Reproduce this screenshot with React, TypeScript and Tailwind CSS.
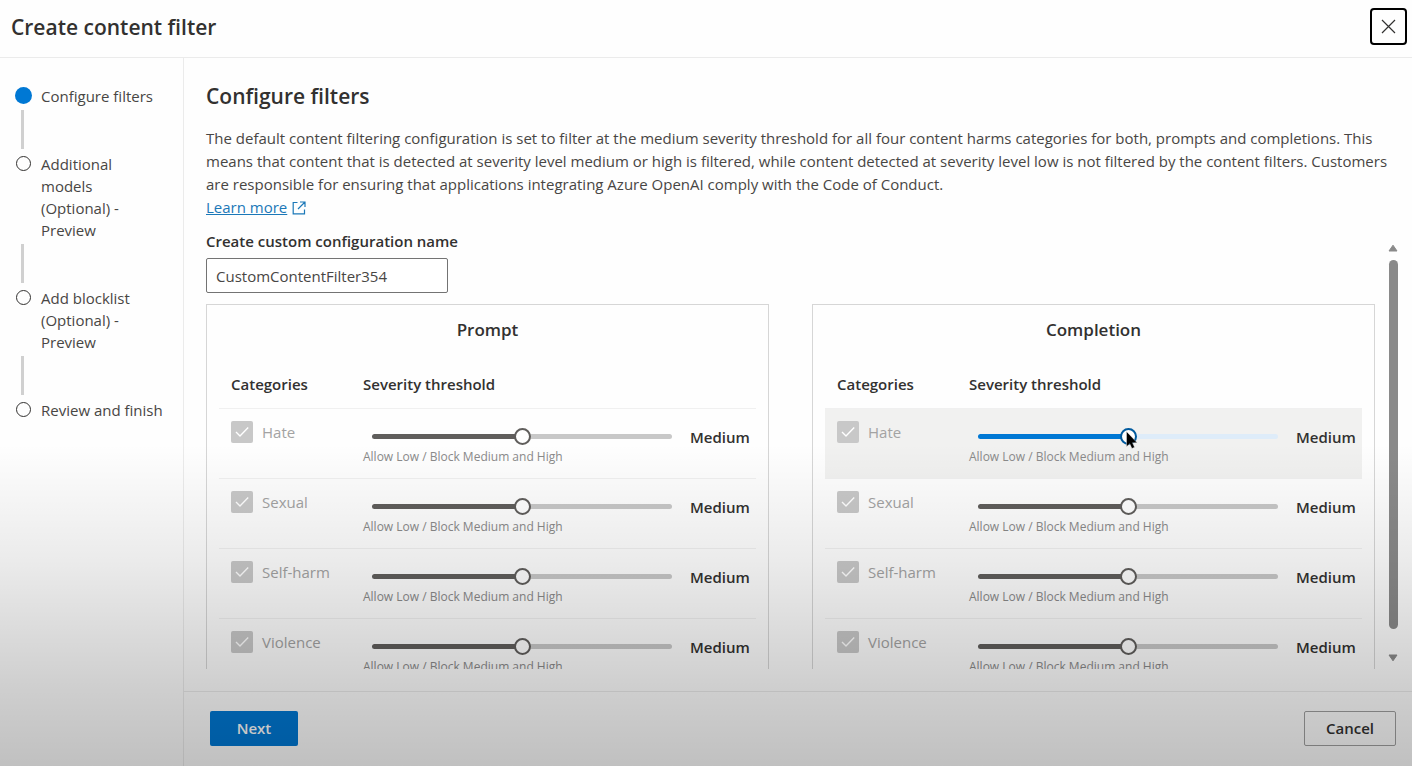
import { useState } from "react";

const steps = [
  { label: "Configure filters", active: true },
  { label: "Additional models (Optional) - Preview", active: false },
  { label: "Add blocklist (Optional) - Preview", active: false },
  { label: "Review and finish", active: false },
];

const categories = ["Hate", "Sexual", "Self-harm", "Violence"];

const levels = [
  { name: "Low", hint: "Block Low, Medium and High" },
  { name: "Medium", hint: "Allow Low / Block Medium and High" },
  { name: "High", hint: "Allow Low and Medium / Block High" },
];

function Steps() {
  return (
    <nav aria-label="Steps" className="w-[184px] shrink-0 border-r border-[#ebebeb] pt-[27px] pr-5 pl-[15px]">
      <ol>
        {steps.map((step, i) => (
          <li key={step.label}>
            <div className="flex gap-[9px]">
              <span className="flex h-5 w-[17px] shrink-0 items-center justify-center">
                {step.active ? (
                  <span className="size-[17px] rounded-full bg-[#0078d4]" />
                ) : (
                  <span className="size-[15px] rounded-full border border-[#323130]" />
                )}
              </span>
              <span className="text-[15px] leading-[22px] text-[#484644]">{step.label}</span>
            </div>
            {i < steps.length - 1 && <div className="mt-[3px] mb-1 ml-[6px] h-[39px] w-[3px] bg-[#d0d0d0]" />}
          </li>
        ))}
      </ol>
    </nav>
  );
}

function Pointer() {
  return (
    <svg className="pointer-events-none absolute top-[3px] left-1/2 -ml-[2px]" width="12" height="18" viewBox="0 0 12 18" aria-hidden="true">
      <path d="M0.500 0.500v15.200l3.300-2.900 2.100 4.700 2.700-1.200-2.100-4.500h4.700z" fill="#000" stroke="#fff" strokeWidth="0.400" />
    </svg>
  );
}

function CategoryRow({ panel, category, hovered }: { panel: string; category: string; hovered: boolean }) {
  const [value, setValue] = useState(1);
  const id = `${panel}-${category}`.toLowerCase();
  return (
    <tr className={`h-[70px] border-t border-[#f0f0f0] align-top ${hovered ? "bg-[#f1f1f0]" : ""}`}>
      <td className="pt-3 pl-3">
        <div className="flex items-center gap-[9px]">
          <span className="relative flex size-[22px]">
            <input
              id={id}
              type="checkbox"
              checked
              disabled
              readOnly
              className="size-[22px] appearance-none rounded-[2px] bg-[#c8c8c8]"
            />
            <svg className="pointer-events-none absolute inset-0" width="22" height="22" viewBox="0 0 22 22" fill="none" aria-hidden="true">
              <path d="M5 11l4 4 8.200-8.500" stroke="#fff" strokeWidth="1.400" />
            </svg>
          </span>
          <label htmlFor={id} className="text-[15px] leading-[22px] text-[#a3a3a3]">
            {category}
          </label>
        </div>
      </td>
      <td className="pt-[19px]">
        <div className="relative mr-[18px] ml-[9px] flex">
          <input
            type="range"
            min={0}
            max={2}
            value={value}
            onChange={(e) => setValue(Number(e.target.value))}
            aria-label={`${panel} ${category} severity threshold`}
            style={{ "--p": `${value * 50}%` } as React.CSSProperties}
            className={`h-[18px] w-full appearance-none bg-transparent [&::-webkit-slider-runnable-track]:h-[5px] [&::-webkit-slider-runnable-track]:rounded-full [&::-webkit-slider-thumb]:-mt-[6px] [&::-webkit-slider-thumb]:size-[17px] [&::-webkit-slider-thumb]:appearance-none [&::-webkit-slider-thumb]:rounded-full [&::-webkit-slider-thumb]:border-2 [&::-webkit-slider-thumb]:bg-white ${
              hovered
                ? "[&::-webkit-slider-runnable-track]:bg-[linear-gradient(to_right,#0078d4_var(--p),#deecf9_var(--p))] [&::-webkit-slider-thumb]:border-[#005a9e]"
                : "[&::-webkit-slider-runnable-track]:bg-[linear-gradient(to_right,#605e5c_var(--p),#c8c8c8_var(--p))] [&::-webkit-slider-thumb]:border-[#605e5c]"
            }`}
          />
          {hovered && <Pointer />}
        </div>
        <p className="mt-[3px] text-[12px] leading-4 text-[#8a8a8a]">{levels[value].hint}</p>
      </td>
      <td className="pt-[18px] text-[15px] leading-5 font-semibold text-[#323130]">{levels[value].name}</td>
    </tr>
  );
}

function Panel({ title, hoveredCategory }: { title: string; hoveredCategory?: string }) {
  return (
    <section className="min-w-0 flex-1 border border-[#d6d6d6] px-3 pb-4">
      <h3 className="pt-3 text-center text-[17px] leading-[26px] font-semibold text-[#323130]">{title}</h3>
      <table className="mt-[17px] w-full table-fixed border-collapse text-left">
        <thead>
          <tr className="h-12 text-[15px] font-semibold text-[#323130]">
            <th scope="col" className="w-[144px] pl-3 font-semibold">
              Categories
            </th>
            <th scope="col" className="font-semibold">
              Severity threshold
            </th>
            <th scope="col" aria-label="Level" className="w-[66px]" />
          </tr>
        </thead>
        <tbody>
          {categories.map((category) => (
            <CategoryRow key={category} panel={title} category={category} hovered={category === hoveredCategory} />
          ))}
        </tbody>
      </table>
    </section>
  );
}

function ScrollBar() {
  return (
    <div aria-hidden="true" className="flex w-[14px] shrink-0 flex-col items-center pt-[14px] pb-[7px]">
      <svg width="10" height="8" viewBox="0 0 10 8">
        <path d="M5 1.200L9 7H1z" fill="#8a8a8a" stroke="#8a8a8a" strokeLinejoin="round" />
      </svg>
      <div className="mt-2 mb-[25px] w-[9px] flex-1 rounded-full bg-[#8a8a8a]" />
      <svg width="10" height="8" viewBox="0 0 10 8">
        <path d="M5 6.800L9 1H1z" fill="#8a8a8a" stroke="#8a8a8a" strokeLinejoin="round" />
      </svg>
    </div>
  );
}

export default function App() {
  const [name, setName] = useState("CustomContentFilter354");
  return (
    <div className="relative flex h-screen flex-col overflow-hidden bg-[#fefefe] font-['Open_Sans','Noto_Sans',sans-serif] text-[#323130]">
      <header className="flex h-[58px] shrink-0 items-center justify-between border-b border-[#ebebeb] pr-[5px] pb-1 pl-[11px]">
        <h1 className="text-[21px] leading-7 font-semibold">Create content filter</h1>
        <button type="button" aria-label="Close" className="flex size-[37px] items-center justify-center rounded-[4px] border-2 border-black">
          <svg width="15" height="15" viewBox="0 0 15 15" fill="none" stroke="#323130" strokeWidth="1.200" aria-hidden="true">
            <path d="M1 1l13 13M14 1L1 14" />
          </svg>
        </button>
      </header>

      <div className="flex min-h-0 flex-1">
        <Steps />
        <div className="flex min-w-0 flex-1 flex-col">
          <main className="flex min-h-0 flex-1 flex-col pt-6 pr-3 pb-[22px] pl-[22px]">
            <h2 className="text-[21px] leading-7 font-semibold">Configure filters</h2>
            <p className="mt-[17px] mr-2 text-[15px] leading-[23px] text-[#484644]">
              The default content filtering configuration is set to filter at the medium severity threshold for all four
              content harms categories for both, prompts and completions. This means that content that is detected at
              severity level medium or high is filtered, while content detected at severity level low is not filtered by
              the content filters. Customers are responsible for ensuring that applications integrating Azure OpenAI
              comply with the Code of Conduct.
            </p>
            <a href="#learn-more" className="flex items-center gap-[5px] self-start text-[15px] leading-[23px] text-[#1b78b8]">
              <span className="underline">Learn more</span>
              <svg width="14" height="14" viewBox="0 0 14 14" fill="none" stroke="currentColor" strokeWidth="1.200" aria-hidden="true">
                <path d="M5.500 1.500H1.200v11.300h11.300V8.500M8 1h5v5M13 1L6 8" />
              </svg>
            </a>

            <div className="mt-[11px] flex min-h-0 flex-1 gap-[7px]">
              <div className="min-w-0 flex-1 overflow-y-auto [scrollbar-width:none]">
                <label htmlFor="config-name" className="mb-[6px] block text-[15px] leading-[22px] font-semibold">
                  Create custom configuration name
                </label>
                <input
                  id="config-name"
                  type="text"
                  value={name}
                  onChange={(e) => setName(e.target.value)}
                  className="block h-[35px] w-[242px] rounded-[2px] border border-[#737373] bg-white px-[9px] text-[15px] text-[#484644]"
                />
                <div className="mt-[11px] mr-1 flex gap-[43px]">
                  <Panel title="Prompt" />
                  <Panel title="Completion" hoveredCategory="Hate" />
                </div>
              </div>
              <ScrollBar />
            </div>
          </main>

          <footer className="flex h-[75px] shrink-0 items-center justify-between border-t border-[#ebebeb] pr-4 pb-[2px] pl-[26px]">
            <button type="button" className="h-[35px] w-[88px] rounded-[2px] bg-[#0078d4] text-[15px] font-semibold text-white">
              Next
            </button>
            <button type="button" className="h-[35px] w-[92px] rounded-[2px] border border-[#a0a0a0] text-[15px] font-semibold">
              Cancel
            </button>
          </footer>
        </div>
      </div>

      <div className="pointer-events-none absolute inset-x-0 bottom-0 h-[42%] bg-[linear-gradient(to_bottom,rgba(0,0,0,0),rgba(0,0,0,0.075)_36%,rgba(0,0,0,0.19)_76%,rgba(0,0,0,0.245))]" />
    </div>
  );
}
